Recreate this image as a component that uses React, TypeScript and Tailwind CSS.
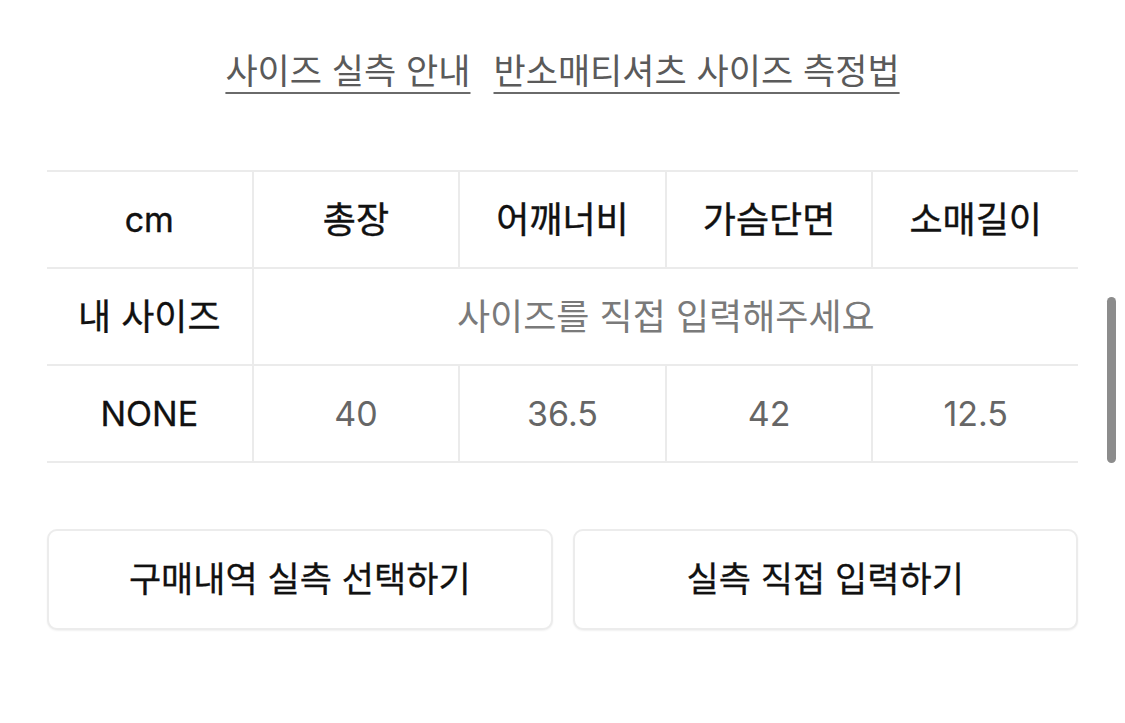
import React from "react";

const font = { fontFamily: 'Inter, "Noto Sans CJK KR", "Noto Sans", sans-serif' };

const headers = ["cm", "총장", "어깨너비", "가슴단면", "소매길이"];
const values = ["40", "36.5", "42", "12.5"];

const Cell = ({
  children,
  className = "",
}: {
  children: React.ReactNode;
  className?: string;
}) => (
  <div
    className={`bg-white h-[95px] flex items-center justify-center ${className}`}
  >
    {children}
  </div>
);

export default function App() {
  return (
    <div
      className="relative w-[1125px] h-[723px] bg-white overflow-hidden px-[47px]"
      style={font}
    >
      {/* guide links */}
      <div className="flex justify-center gap-[23px] pt-[48px] text-[35px] leading-[46px] text-[#5a5a5a]">
        <a className="underline decoration-2 decoration-[#6a6a6a] underline-offset-[8px]">
          사이즈 실측 안내
        </a>
        <a className="underline decoration-2 decoration-[#6a6a6a] underline-offset-[8px]">
          반소매티셔츠 사이즈 측정법
        </a>
      </div>

      {/* size table */}
      <div className="mt-[76px] grid grid-cols-5 gap-[2px] py-[2px] bg-[#ebebeb] text-[36px]">
        {headers.map((h) => (
          <Cell key={h} className="text-[#111] [-webkit-text-stroke:0.4px]">
            {h === "cm" ? <span className="text-[34px]">{h}</span> : h}
          </Cell>
        ))}
        <Cell className="text-[#111] [-webkit-text-stroke:0.3px]">내 사이즈</Cell>
        <Cell className="col-span-4 text-[#7a7a7a]">사이즈를 직접 입력해주세요</Cell>
        <Cell className="text-[#111] text-[34px] [-webkit-text-stroke:0.3px]">NONE</Cell>
        {values.map((v) => (
          <Cell key={v} className="text-[#666] text-[34px]">
            {v}
          </Cell>
        ))}
      </div>

      {/* action buttons */}
      <div className="mt-[66px] grid grid-cols-2 gap-[20px]">
        <button className="h-[101px] rounded-[10px] border-2 border-[#ececec] bg-white text-[35px] text-[#111] [-webkit-text-stroke:0.3px] shadow-[0_1px_2px_rgba(0,0,0,0.06)]">
          구매내역 실측 선택하기
        </button>
        <button className="h-[101px] rounded-[10px] border-2 border-[#ececec] bg-white text-[35px] text-[#111] [-webkit-text-stroke:0.3px] shadow-[0_1px_2px_rgba(0,0,0,0.06)]">
          실측 직접 입력하기
        </button>
      </div>

      {/* scroll indicator */}
      <div className="absolute left-[1107px] top-[297px] w-[9px] h-[166px] rounded-full bg-[#8c8c8c]" />
    </div>
  );
}
